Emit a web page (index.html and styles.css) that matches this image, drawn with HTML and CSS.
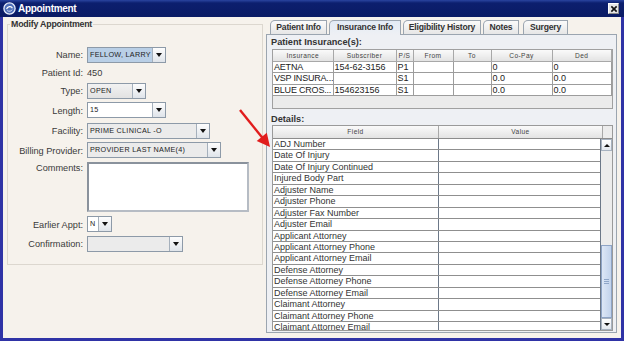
FILE: index.html
```html
<!DOCTYPE html>
<html lang="en">
<head>
  <meta charset="UTF-8">
  <title>Appointment</title>
  <link rel="stylesheet" href="styles.css">
</head>
<body>

<div class="window">
  <div class="titlebar">
    <svg class="title-icon" viewBox="0 0 13 13">
      <circle cx="6.5" cy="6.5" r="5.6" fill="#4f6fb8" stroke="#e8eefc" stroke-width="1.3"/>
      <path d="M3.6 7.2 C4.2 4.2 8.4 3.6 9.4 6.2" fill="none" stroke="#fff" stroke-width="1.2"/>
      <path d="M4.2 8.6 C6 9.8 8.6 9.2 9.2 7.6" fill="none" stroke="#cfdaf5" stroke-width="1"/>
    </svg>
    <span class="title">Appointment</span>
    <span class="close-btn">
      <svg viewBox="0 0 9 9"><path d="M1.5 1.5 L7.5 7.5 M7.5 1.5 L1.5 7.5" stroke="#111" stroke-width="1.8"/></svg>
    </span>
  </div>

  <div class="frame-body">
    <!-- linke Seite: Termin bearbeiten -->
    <div class="left-col">
      <fieldset class="group">
        <legend>Modify Appointment</legend>
        <div class="form">
          <label>Name:</label>
          <div class="combo combo-name selected"><span>FELLOW, LARRY</span><i class="arrow"></i></div>

          <label>Patient Id:</label>
          <span class="value">450</span>

          <label>Type:</label>
          <div class="combo combo-type"><span>OPEN</span><i class="arrow"></i></div>

          <label>Length:</label>
          <div class="combo combo-length white"><span>15</span><i class="arrow"></i></div>

          <label>Facility:</label>
          <div class="combo combo-facility"><span>PRIME CLINICAL -O</span><i class="arrow"></i></div>

          <label>Billing Provider:</label>
          <div class="combo combo-billing"><span>PROVIDER LAST NAME(4)</span><i class="arrow"></i></div>

          <label class="top">Comments:</label>
          <div class="comments"></div>

          <label>Earlier Appt:</label>
          <div class="combo combo-earlier white"><span>N</span><i class="arrow"></i></div>

          <label>Confirmation:</label>
          <div class="combo combo-confirm"><span></span><i class="arrow"></i></div>
        </div>
      </fieldset>
    </div>

    <!-- rechte Seite: Tabs -->
    <div class="right-col">
      <div class="tabs">
        <div class="tab tab-patient">Patient Info</div>
        <div class="tab tab-insurance active">Insurance Info</div>
        <div class="tab tab-eligibility">Eligibility History</div>
        <div class="tab tab-notes">Notes</div>
        <div class="tab tab-surgery">Surgery</div>
      </div>
      <div class="tab-panel">
        <div class="section-title">Patient Insurance(s):</div>
        <div class="ins-pane">
          <table class="ins-table">
            <colgroup>
              <col class="c-ins"><col class="c-sub"><col class="c-ps"><col class="c-from">
              <col class="c-to"><col class="c-copay"><col class="c-ded">
            </colgroup>
            <thead>
              <tr><th>Insurance</th><th>Subscriber</th><th>P/S</th><th>From</th><th>To</th><th>Co-Pay</th><th>Ded</th></tr>
            </thead>
            <tbody>
              <tr><td>AETNA</td><td>154-62-3156</td><td>P1</td><td></td><td></td><td>0</td><td>0</td></tr>
              <tr><td>VSP INSURA...</td><td></td><td>S1</td><td></td><td></td><td>0.0</td><td>0.0</td></tr>
              <tr><td>BLUE CROS...</td><td>154623156</td><td>S1</td><td></td><td></td><td>0.0</td><td>0.0</td></tr>
            </tbody>
          </table>
        </div>

        <div class="section-title details-title">Details:</div>
        <div class="details-pane">
          <div class="details-head">
            <div class="dh-cell dh-field">Field</div>
            <div class="dh-cell dh-value">Value</div>
            <div class="dh-corner"></div>
          </div>
          <div class="details-body">
            <div class="viewport">
              <div class="drow"><span>ADJ Number</span><span></span></div>
              <div class="drow"><span>Date Of Injury</span><span></span></div>
              <div class="drow"><span>Date Of Injury Continued</span><span></span></div>
              <div class="drow"><span>Injured Body Part</span><span></span></div>
              <div class="drow"><span>Adjuster Name</span><span></span></div>
              <div class="drow"><span>Adjuster Phone</span><span></span></div>
              <div class="drow"><span>Adjuster Fax Number</span><span></span></div>
              <div class="drow"><span>Adjuster Email</span><span></span></div>
              <div class="drow"><span>Applicant Attorney</span><span></span></div>
              <div class="drow"><span>Applicant Attorney Phone</span><span></span></div>
              <div class="drow"><span>Applicant Attorney Email</span><span></span></div>
              <div class="drow"><span>Defense Attorney</span><span></span></div>
              <div class="drow"><span>Defense Attorney Phone</span><span></span></div>
              <div class="drow"><span>Defense Attorney Email</span><span></span></div>
              <div class="drow"><span>Claimant Attorney</span><span></span></div>
              <div class="drow"><span>Claimant Attorney Phone</span><span></span></div>
              <div class="drow"><span>Claimant Attorney Email</span><span></span></div>
            </div>
            <div class="vscroll">
              <div class="sb-btn up"></div>
              <div class="sb-track"></div>
              <div class="sb-thumb"><i></i></div>
              <div class="sb-btn down"></div>
            </div>
          </div>
        </div>
      </div>
    </div>
  </div>

  <!-- roter Hinweispfeil -->
  <svg class="pointer-arrow" width="40" height="46" viewBox="0 0 40 46">
    <line x1="5" y1="5" x2="28" y2="33.5" stroke="#e11d1d" stroke-width="2.4"/>
    <polygon points="35,42 21.7,36 31.8,27.8" fill="#e11d1d"/>
  </svg>
</div>

</body>
</html>
```

FILE: styles.css
```css
body {
  margin: 0;
  font-family: "Liberation Sans", Arial, sans-serif;
  color: #333;
}

.window {
  position: relative;
  width: 624px;
  height: 341px;
  box-sizing: border-box;
  padding: 0 3px 3px;
  background: #2f33a6;
  display: flex;
  flex-direction: column;
}

/* Titelleiste */
.titlebar {
  flex-shrink: 0;
  height: 17px;
  margin: 0 -3px;
  padding: 0 5px 0 3px;
  display: flex;
  align-items: center;
  background: linear-gradient(#2a45a0, #0c1f6e 3px, #0a1b64);
  color: #fff;
}

.title-icon {
  width: 13px;
  height: 13px;
  margin-right: 2px;
}

.title {
  flex: 1;
  font-size: 10px;
  font-weight: bold;
  letter-spacing: -0.3px;
}

.close-btn {
  width: 11px;
  height: 11px;
  box-sizing: border-box;
  border: 1px solid #fff;
  border-right-color: #8a8a8a;
  border-bottom-color: #8a8a8a;
  background: #e6e6e6;
  display: flex;
  align-items: center;
  justify-content: center;
}

.close-btn svg {
  width: 8px;
  height: 8px;
}

.frame-body {
  flex: 1;
  min-height: 0;
  display: flex;
  background: #f6f2ec;
}

/* linke Gruppe */
.left-col {
  width: 260px;
  box-sizing: border-box;
  padding: 2px 0 0 4px;
}

.group {
  width: 256px;
  box-sizing: border-box;
  margin: 0;
  padding: 17px 0 12px;
  border: 1px solid #dcd7cf;
  min-width: 0;
}

.group legend {
  margin-left: 2px;
  padding: 0 1px;
  font-size: 8.8px;
  font-weight: bold;
  line-height: 11px;
  letter-spacing: -0.2px;
  color: #333;
}

.form {
  display: grid;
  grid-template-columns: 75px 1fr;
  grid-template-rows: 16px 14px 16px 18px 16px 17px 51px 17px 16px;
  column-gap: 4px;
  row-gap: 3px;
}

.form label {
  align-self: center;
  text-align: right;
  white-space: nowrap;
  font-size: 9.2px;
  line-height: 12px;
  color: #3a3a3a;
}

.form label.top {
  align-self: start;
}

.form .value {
  align-self: center;
  font-size: 9.2px;
  line-height: 12px;
  color: #3a3a3a;
}

.combo {
  height: 16px;
  box-sizing: border-box;
  border: 1px solid #8d9aa8;
  background: #ebebeb;
  display: flex;
}

.combo span {
  flex: 1;
  padding-left: 2px;
  font-size: 7.2px;
  letter-spacing: 0.3px;
  line-height: 14px;
  color: #222;
  white-space: nowrap;
  overflow: hidden;
}

.combo .arrow {
  width: 12px;
  border-left: 1px solid #a5b0bc;
  background: linear-gradient(#fdfdfd, #dfe4ea);
  display: flex;
  align-items: center;
  justify-content: center;
}

.combo .arrow::after {
  content: "";
  border-left: 3.5px solid transparent;
  border-right: 3.5px solid transparent;
  border-top: 4px solid #111;
}

.combo.selected { background: #b9cfe6; }
.combo.white { background: #fff; }
.combo-type { background: linear-gradient(#f2f2f2, #e2e2e2); }

.combo-name { width: 79px; }
.combo-type { width: 59px; }
.combo-length { width: 79px; }
.combo-facility { width: 123px; }
.combo-billing { width: 134px; }
.combo-earlier { width: 25px; }
.combo-confirm { width: 96px; }

.comments {
  width: 162px;
  height: 50px;
  box-sizing: border-box;
  border: 2px solid #b6bcc4;
  border-top-color: #8a929c;
  border-left-color: #8a929c;
  background: #fff;
}

/* rechte Seite */
.right-col {
  flex: 1;
  min-height: 0;
  display: flex;
  flex-direction: column;
  padding: 3px 4px 5px 3px;
}

.tabs {
  flex-shrink: 0;
  display: flex;
  gap: 2px;
  height: 14px;
  padding-left: 4px;
}

.tab {
  box-sizing: border-box;
  border: 1px solid #9ba5b0;
  border-bottom: none;
  border-top-left-radius: 5px;
  background: linear-gradient(#fbfbfb, #e6e6e6);
  font-size: 8.6px;
  font-weight: bold;
  letter-spacing: -0.2px;
  line-height: 13px;
  text-align: center;
  color: #333;
  white-space: nowrap;
}

.tab-patient { width: 57px; }
.tab-insurance { width: 72px; }
.tab-eligibility { width: 78px; }
.tab-notes { width: 36px; }
.tab-surgery { width: 45px; margin-left: 2px; }

.tab.active {
  height: 15px;
  margin-bottom: -1px;
  background: linear-gradient(#e3ebf5, #eef0f4);
  position: relative;
}

.tab-panel {
  flex: 1;
  min-height: 0;
  display: flex;
  flex-direction: column;
  border: 1px solid #9ba5b0;
  background: #eef0f4;
  padding: 1px 3px 1px 5px;
}

.section-title {
  flex-shrink: 0;
  font-size: 9.2px;
  font-weight: bold;
  line-height: 12px;
  margin-bottom: 1px;
  margin-left: -1px;
  color: #333;
}

.details-title {
  margin-top: 4px;
  margin-bottom: 0;
}

.ins-pane {
  flex-shrink: 0;
  height: 60px;
  box-sizing: border-box;
  border: 1px solid #a0a0a0;
  background: #ebebeb;
  overflow: hidden;
}

.ins-table {
  width: 100%;
  border-collapse: collapse;
  table-layout: fixed;
}

.c-ins { width: 60px; }
.c-sub { width: 63px; }
.c-ps { width: 17px; }
.c-from { width: 40px; }
.c-to { width: 38px; }
.c-copay { width: 61px; }

.ins-table th {
  padding: 0;
  line-height: 11px;
  font-size: 6.6px;
  font-weight: normal;
  letter-spacing: 0.4px;
  color: #444;
  background: linear-gradient(#fafafa, #e3e3e3);
  border: 1px solid #a8a8a8;
  border-top: none;
}

.ins-table th:first-child,
.ins-table td:first-child { border-left: none; }

.ins-table td {
  padding: 0 0 0 1px;
  line-height: 10.3px;
  font-size: 9px;
  color: #222;
  background: #fff;
  border: 1px solid #9c9c9c;
  white-space: nowrap;
  overflow: hidden;
}

.ins-table td:first-child { letter-spacing: -0.2px; }

/* Detail-Tabelle */
.details-pane {
  flex: 1;
  display: flex;
  flex-direction: column;
  border: 1px solid #9a9a9a;
  background: #ebebeb;
  min-height: 0;
}

.details-head {
  flex-shrink: 0;
  display: flex;
  height: 12px;
  border-bottom: 1px solid #8c8c8c;
}

.dh-cell {
  text-align: center;
  font-size: 6.6px;
  letter-spacing: 0.4px;
  line-height: 12px;
  color: #444;
  background: linear-gradient(#fafafa, #e3e3e3);
  border-right: 1px solid #a8a8a8;
}

.dh-field { width: 165px; }
.dh-value { width: 163px; }

.dh-corner {
  flex: 1;
  background: #ececec;
}

.details-body {
  flex: 1;
  display: flex;
  min-height: 0;
  overflow: hidden;
}

.viewport {
  flex: 1;
  overflow: hidden;
  background: #fff;
  border-right: 1px solid #6c7888;
}

.drow {
  display: grid;
  grid-template-columns: 166px 1fr;
  height: 11.44px;
  box-sizing: border-box;
  border-bottom: 1px solid #8f8f8f;
}

.drow span {
  padding-left: 1px;
  font-size: 9px;
  line-height: 10.4px;
  color: #333;
  white-space: nowrap;
}

.drow span:first-child {
  border-right: 1px solid #6c7888;
}

.vscroll {
  width: 11px;
  display: flex;
  flex-direction: column;
  background: #ececec;
}

.sb-btn {
  flex-shrink: 0;
  height: 12px;
  box-sizing: border-box;
  border: 1px solid #a7b2c0;
  background: linear-gradient(#ffffff, #e2e7ee);
  display: flex;
  align-items: center;
  justify-content: center;
}

.sb-btn::after {
  content: "";
  border-left: 3px solid transparent;
  border-right: 3px solid transparent;
}

.sb-btn.up::after { border-bottom: 3px solid #111; }
.sb-btn.down::after { border-top: 3px solid #111; }

.sb-track { flex: 1; }

.sb-thumb {
  flex-shrink: 0;
  height: 73px;
  box-sizing: border-box;
  border: 1px solid #8ea4c6;
  background: linear-gradient(to right, #dde7f6, #c2d3ec);
  display: flex;
  align-items: center;
  justify-content: center;
}

.sb-thumb i {
  width: 5px;
  height: 5px;
  background: repeating-linear-gradient(#8fa6c8 0 1px, transparent 1px 2px);
}

/* Hinweispfeil liegt über dem Inhalt */
.pointer-arrow {
  position: absolute;
  left: 235px;
  top: 105px;
}
```
